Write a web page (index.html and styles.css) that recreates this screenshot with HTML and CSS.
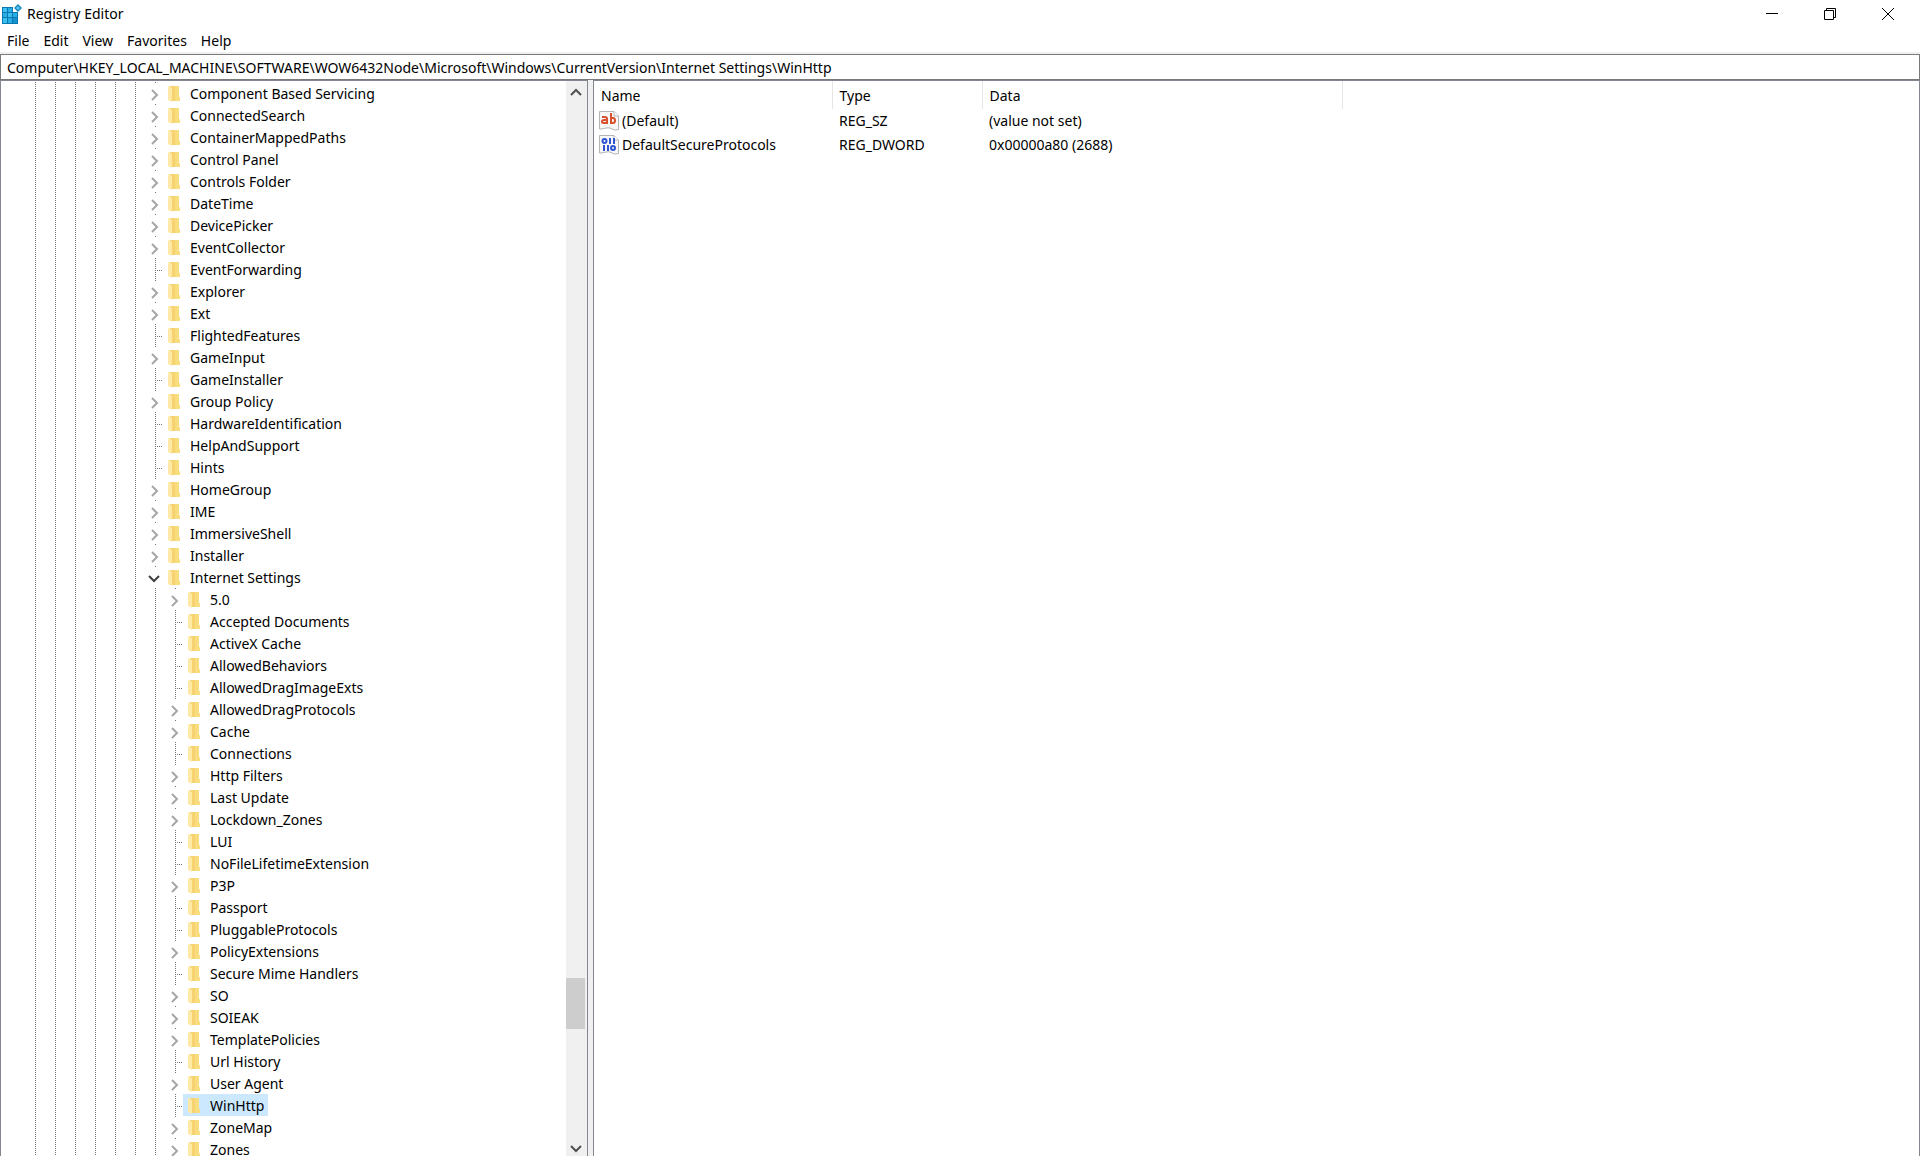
FILE: index.html
```html
<!DOCTYPE html>
<html lang="en">
<head>
    <meta charset="UTF-8">
    <meta name="viewport" content="width=device-width, initial-scale=1.0">
    <title>Registry Editor</title>
    <link rel="stylesheet" href="styles.css">
</head>
<body>
    <!-- Shared icons -->
    <svg class="sprite" aria-hidden="true">
        <symbol id="folder" viewBox="0 0 12 16">
            <path d="M2 0H11V11L12 12V15H2Z" fill="#f6d271"/>
            <path d="M7 0H11V11L12 12V15H7Z" fill="#f9dc7e"/>
            <path d="M0 0L4 2V16L0 14Z" fill="#ffe9a6"/>
        </symbol>
        <symbol id="closed" viewBox="0 0 8 12">
            <path d="M1 1L6 6L1 11" fill="none" stroke="#a6a6a6" stroke-width="2"/>
        </symbol>
        <symbol id="open" viewBox="0 0 12 8">
            <path d="M1 1L6 6L11 1" fill="none" stroke="#404040" stroke-width="2"/>
        </symbol>
        <symbol id="page" viewBox="0 0 20 20">
            <path d="M.5 .5H15L19.5 5V18.5Q16 20 13 18T7 17T.5 18Z" fill="#f7f7f7" stroke="#b4b4b4"/>
            <path d="M15 .5V5H19.5" fill="#fff" stroke="#b4b4b4"/>
        </symbol>
    </svg>

    <div class="window">
        <header class="title-bar">
            <svg class="app-icon" viewBox="0 0 20 20" aria-hidden="true">
                <path d="M0 3H16V20H0Z" fill="#0a77b0"/>
                <path d="M1 4H5V8H1ZM6 9H10V13H6ZM1 14H5V19H1Z" fill="#3cc0f0"/>
                <path d="M6 4H10V8H6ZM1 9H5V13H1ZM11 9H15V13H11ZM6 14H10V19H6Z" fill="#27aee6"/>
                <path d="M11 14H15V19H11Z" fill="#1593cf"/>
                <path d="M11 0H20V8H11Z" fill="#fff"/>
                <path d="M16 0L20 4L16 8L12 4Z" fill="#1787bd"/>
                <path d="M16 2L18 4L16 6L14 4Z" fill="#5ec9ef"/>
            </svg>
            <h1>Registry Editor</h1>
            <div class="window-buttons">
                <button aria-label="Minimize"><svg viewBox="0 0 12 12"><path d="M0 5.5H12"/></svg></button>
                <button aria-label="Restore"><svg viewBox="0 0 12 12"><path d="M.5 2.5H9.5V11.5H.5ZM2.5 2.5V.5H11.5V9.5H9.5"/></svg></button>
                <button aria-label="Close"><svg viewBox="0 0 12 12"><path d="M0 0L12 12M12 0L0 12"/></svg></button>
            </div>
        </header>

        <nav class="menu-bar">
            <button>File</button>
            <button>Edit</button>
            <button>View</button>
            <button>Favorites</button>
            <button>Help</button>
        </nav>

        <input class="address" type="text" aria-label="Address" value="Computer\HKEY_LOCAL_MACHINE\SOFTWARE\WOW6432Node\Microsoft\Windows\CurrentVersion\Internet Settings\WinHttp">

        <main class="panes">
            <section class="tree-pane">
                <ul class="tree" id="tree"></ul>
                <div class="scrollbar">
                    <button aria-label="Scroll up"><svg viewBox="0 0 12 8"><path d="M1 7L6 2L11 7"/></svg></button>
                    <div class="track">
                        <div class="thumb"></div>
                    </div>
                    <button aria-label="Scroll down"><svg viewBox="0 0 12 8"><path d="M1 1L6 6L11 1"/></svg></button>
                </div>
            </section>

            <section class="list-pane">
                <table>
                    <colgroup>
                        <col class="col-name">
                        <col class="col-type">
                        <col class="col-data">
                        <col>
                    </colgroup>
                    <thead>
                        <tr><th>Name</th><th>Type</th><th>Data</th><td></td></tr>
                    </thead>
                    <tbody>
                        <tr>
                            <td>
                                <div class="value-name">
                                    <svg viewBox="0 0 20 20" aria-hidden="true">
                                        <use href="#page"/>
                                        <g fill="none" stroke="#d9502e" stroke-width="2">
                                            <path d="M3 6H6Q8 6 8 8V13M8 9H5Q3 9 3 10.500T5 12H8"/>
                                            <path d="M12 2V13M12 7H14Q16 7 16 9.500T14 12H12"/>
                                        </g>
                                    </svg>
                                    (Default)
                                </div>
                            </td>
                            <td>REG_SZ</td>
                            <td>(value not set)</td>
                            <td></td>
                        </tr>
                        <tr>
                            <td>
                                <div class="value-name">
                                    <svg viewBox="0 0 20 20" aria-hidden="true">
                                        <use href="#page"/>
                                        <g fill="none" stroke="#2f55d4" stroke-width="2">
                                            <ellipse cx="5.500" cy="6" rx="2" ry="2"/>
                                            <path d="M11 3V9M15 3V9M5 10V16M9 10V16"/>
                                            <ellipse cx="14" cy="13" rx="2" ry="2"/>
                                        </g>
                                    </svg>
                                    DefaultSecureProtocols
                                </div>
                            </td>
                            <td>REG_DWORD</td>
                            <td>0x00000a80 (2688)</td>
                            <td></td>
                        </tr>
                    </tbody>
                </table>
            </section>
        </main>
    </div>

    <script>
        // [name, state]: "+" has subkeys, "-" is expanded, "" has none
        const keys = [
            ['Component Based Servicing', '+'], ['ConnectedSearch', '+'], ['ContainerMappedPaths', '+'],
            ['Control Panel', '+'], ['Controls Folder', '+'], ['DateTime', '+'], ['DevicePicker', '+'],
            ['EventCollector', '+'], ['EventForwarding', ''], ['Explorer', '+'], ['Ext', '+'],
            ['FlightedFeatures', ''], ['GameInput', '+'], ['GameInstaller', ''], ['Group Policy', '+'],
            ['HardwareIdentification', ''], ['HelpAndSupport', ''], ['Hints', ''], ['HomeGroup', '+'],
            ['IME', '+'], ['ImmersiveShell', '+'], ['Installer', '+'], ['Internet Settings', '-']
        ];
        const subkeys = [
            ['5.0', '+'], ['Accepted Documents', ''], ['ActiveX Cache', ''], ['AllowedBehaviors', ''],
            ['AllowedDragImageExts', ''], ['AllowedDragProtocols', '+'], ['Cache', '+'], ['Connections', ''],
            ['Http Filters', '+'], ['Last Update', '+'], ['Lockdown_Zones', '+'], ['LUI', ''],
            ['NoFileLifetimeExtension', ''], ['P3P', '+'], ['Passport', ''], ['PluggableProtocols', ''],
            ['PolicyExtensions', '+'], ['Secure Mime Handlers', ''], ['SO', '+'], ['SOIEAK', '+'],
            ['TemplatePolicies', '+'], ['Url History', ''], ['User Agent', '+'], ['WinHttp', ''],
            ['ZoneMap', '+'], ['Zones', '+']
        ];

        function addRows(rows, depth) {
            const tree = document.getElementById('tree');
            for (const [name, state] of rows) {
                const guides = '<span class="guide"></span>'.repeat(depth);
                let branch = '<span class="branch leaf"></span>';
                if (state) {
                    const icon = state === '-' ? 'open' : 'closed';
                    branch = `<button class="branch ${icon}" aria-label="Toggle ${name}"><svg><use href="#${icon}"/></svg></button>`;
                }
                const selected = name === 'WinHttp' ? ' selected' : '';
                const row = document.createElement('li');
                row.innerHTML = `${guides}${branch}<span class="key${selected}"><svg><use href="#folder"/></svg>${name}</span>`;
                tree.appendChild(row);
            }
        }

        addRows(keys, 6);
        addRows(subkeys, 7);
    </script>
</body>
</html>
```
FILE: styles.css
```css
* {
    box-sizing: border-box;
}

body {
    margin: 0;
    font-family: "Noto Sans", "Segoe UI", sans-serif;
    font-size: 14px;
    line-height: 22px;
    color: #000;
    background-color: #fff;
}

button {
    padding: 0;
    border: none;
    background: none;
    font: inherit;
    color: inherit;
}

.sprite {
    display: none;
}

.window {
    display: flex;
    flex-direction: column;
    height: 100vh;
    overflow: hidden;
}

/* Title bar */
.title-bar {
    display: flex;
    align-items: center;
    height: 28px;
    padding: 0 3px 0 2px;
}

.app-icon {
    width: 20px;
    height: 20px;
}

.title-bar h1 {
    margin: 0 0 0 5px;
    font-size: 14px;
    font-weight: normal;
}

.window-buttons {
    display: flex;
    margin-left: auto;
}

.window-buttons button {
    display: flex;
    align-items: center;
    justify-content: center;
    width: 58px;
    height: 28px;
}

.window-buttons svg {
    width: 12px;
    height: 12px;
    fill: none;
    stroke: #000;
}

/* Menu */
.menu-bar {
    display: flex;
    gap: 14px;
    height: 26px;
    padding: 2px 7px 0;
    border-bottom: 2px solid #f0f0f0;
}

.address {
    width: 100%;
    height: 26px;
    padding: 0 6px;
    border: 1px solid #7a7a7a;
    outline: none;
    font: inherit;
    color: inherit;
}

/* Panes */
.panes {
    display: flex;
    flex: 1;
    gap: 5px;
    min-height: 0;
    background-color: #f0f0f0;
}

.tree-pane,
.list-pane {
    border: 1px solid #828790;
    border-bottom: none;
    background-color: #fff;
    overflow: hidden;
}

.tree-pane {
    display: flex;
    width: 588px;
}

.list-pane {
    flex: 1;
}

/* Key tree */
.tree {
    flex: 1;
    margin: 0;
    padding: 1px 0 0 24px;
    list-style: none;
}

.tree li {
    display: flex;
    height: 22px;
}

.guide,
.branch {
    background: repeating-linear-gradient(#757575 0 1px, transparent 1px 2px) 10px 0 / 1px 100% no-repeat;
}

.guide {
    width: 20px;
}

.branch {
    width: 18px;
}

.branch.leaf {
    background:
        repeating-linear-gradient(#757575 0 1px, transparent 1px 2px) 10px 0 / 1px 100% no-repeat,
        repeating-linear-gradient(to right, #757575 0 1px, transparent 1px 2px) 12px 12px / 6px 1px no-repeat;
}

/* only the first dot shows above an arrow */
.branch.closed,
.branch.open {
    display: flex;
    align-items: center;
    padding-top: 3px;
    background-size: 1px 1px;
}

.branch.closed svg {
    width: 8px;
    height: 12px;
    margin-left: 6px;
}

.branch.open svg {
    width: 12px;
    height: 8px;
    margin-left: 3px;
}

.key {
    display: flex;
    align-items: center;
    padding: 1px 4px 0 5px;
    white-space: nowrap;
}

.key svg {
    width: 12px;
    height: 16px;
    margin-right: 10px;
}

.key.selected {
    background-color: #cce8ff;
}

/* Scrollbar */
.scrollbar {
    display: flex;
    flex-direction: column;
    width: 21px;
    padding-top: 1px;
    background-color: #f0f0f0;
}

.scrollbar button {
    display: flex;
    align-items: center;
    justify-content: center;
    width: 19px;
    height: 20px;
}

.scrollbar button:last-child {
    height: 14px;
}

.scrollbar svg {
    width: 12px;
    height: 8px;
    fill: none;
    stroke: #505050;
    stroke-width: 2;
}

.track {
    display: flex;
    flex-direction: column;
    flex: 1;
}

.track::before {
    content: "";
    flex: 876;
}

.track::after {
    content: "";
    flex: 113;
}

.thumb {
    flex: 51;
    width: 19px;
    background-color: #cdcdcd;
}

/* Value list */
table {
    width: 100%;
    table-layout: fixed;
    border-collapse: collapse;
}

.col-name {
    width: 238px;
}

.col-type {
    width: 150px;
}

.col-data {
    width: 360px;
}

th,
td {
    height: 24px;
    padding: 0 7px;
    text-align: left;
    font-weight: normal;
}

td:first-child {
    padding-left: 5px;
}

th {
    height: 28px;
    padding-top: 2px;
    border-right: 1px solid #e5e5e5;
}

.value-name {
    display: flex;
    align-items: center;
    gap: 3px;
}

.value-name svg {
    width: 20px;
    height: 20px;
}
```
